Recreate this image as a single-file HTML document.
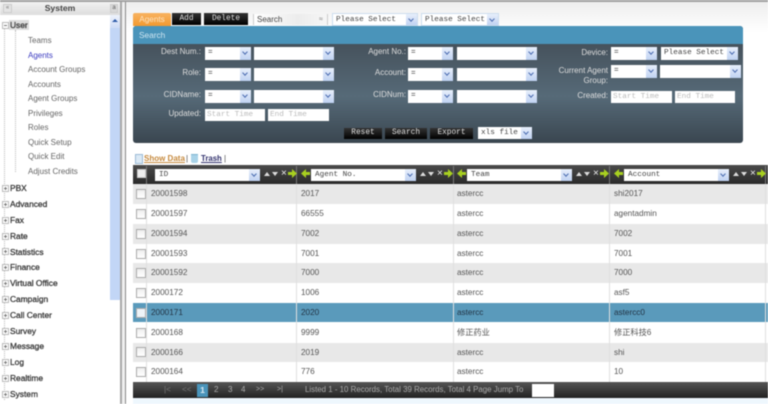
<!DOCTYPE html>
<html><head><meta charset="utf-8"><style>
html,body{margin:0;padding:0;width:768px;height:404px;overflow:hidden;background:#fff}
body{position:relative;font-family:"Liberation Sans","Noto Sans CJK SC",sans-serif;font-size:8.2px;color:#444}
#w{position:absolute;left:0;top:0;width:768px;height:404px;overflow:hidden;background:#fff;filter:blur(.4px)}
div,span.a{position:absolute;white-space:nowrap}
.tr{left:28px;color:#666;font-size:8px;line-height:10px}
.th{left:10px;color:#3a3a3a;font-size:8.4px;-webkit-text-stroke:.3px #3a3a3a;line-height:10px}
.pm{left:2px;width:5px;height:5px;border:1px solid #bbb;background:#fff}
.pm::before{content:"";position:absolute;left:1px;top:2px;width:3px;height:1px;background:#777}
.pl::after{content:"";position:absolute;left:2px;top:1px;width:1px;height:3px;background:#777}
.s{background:#fff;color:#444;font:7.7px/12px "Liberation Mono",monospace;padding-left:3px;box-sizing:border-box;overflow:hidden}
.s i{position:absolute;right:0;top:0;bottom:0;width:11px;background:linear-gradient(#e8effb,#c0d2f2)}
.s i::after{content:"";position:absolute;left:3px;top:3px;width:3px;height:3px;border-right:1.5px solid #4a6cb0;border-bottom:1.5px solid #4a6cb0;transform:rotate(45deg)}
.l{color:#ddd;font-size:8px;line-height:12px;text-align:right}
.in{background:#fff;color:#bbb;font:7.7px/12px "Liberation Mono",monospace;padding-left:2px;box-sizing:border-box}
.b{background:linear-gradient(#333,#000);color:#ddd;font:7.8px/12px "Liberation Mono",monospace;text-align:center}
.r{left:133px;width:635px}
.c{line-height:20px;font-size:8.2px;color:#555}
.cb{left:136px;width:8px;height:8px;border:1px solid #aaa;background:linear-gradient(#eee,#fff)}
.v{width:1px;background:#e0e0e0}
.hv{width:1px;background:#777;top:166px;height:18px}
.p{top:382px;line-height:16px;color:#aaa;font-size:8.1px}
.ic{color:#eee;font-size:10px;top:169px;line-height:10px}
.up,.dn{top:172px;width:0;height:0;border-left:3px solid transparent;border-right:3px solid transparent}
.up{border-bottom:4px solid #ddd}.dn{border-top:4px solid #ddd}
svg{position:absolute;top:169px;width:9px;height:9px}
</style></head><body><div id="w">
<div style="left:0;top:0;width:768px;height:2px;background:#a0a0a0"></div>
<!-- sidebar -->
<div style="left:0;top:2px;width:120px;height:13px;background:linear-gradient(#f2f2f2,#ddd)"></div>
<div style="left:3px;top:4px;width:9px;height:9px;background:#e4e4e4;border:1px solid #ccc;box-sizing:border-box;font-size:6px;line-height:7px;text-align:center;color:#777">«</div>
<div style="left:40px;width:40px;text-align:center;top:3px;font-size:8.6px;line-height:11px;font-weight:bold;color:#444">System</div>
<div style="left:110px;top:4px;width:8px;height:9px;background:#d8d8d8;border:1px solid #ccc;box-sizing:border-box;font-size:6px;line-height:7px;text-align:center;color:#555">a</div>
<div style="left:110px;top:15px;width:10px;height:285px;background:#c2d6f6"></div>
<div style="left:110px;top:15px;width:10px;height:13px;background:linear-gradient(#eef3fc,#cfdcf6)"></div>
<div style="left:112px;top:19px;width:0;height:0;border-left:3px solid transparent;border-right:3px solid transparent;border-bottom:3px solid #2d5aa8"></div>
<div style="left:120px;top:2px;width:2px;height:402px;background:#a8a8a8"></div>
<div style="left:122px;top:2px;width:3px;height:402px;background:#f0f0f0"></div>
<div style="left:125px;top:2px;width:1px;height:402px;background:#888"></div>
<div style="left:4px;top:28px;width:0;height:372px;border-left:1px dotted #bbb"></div>
<div style="left:15px;top:30px;width:0;height:142px;border-left:1px dotted #bbb"></div>
<div class="pm" style="top:22px"></div><div class="th" style="top:20px;background:#ddd;padding:0 1px;left:9px">User</div>
<div class="tr" style="top:36px">Teams</div>
<div class="tr" style="top:51px;color:#3b3bc0">Agents</div>
<div class="tr" style="top:65px">Account Groups</div>
<div class="tr" style="top:80px">Accounts</div>
<div class="tr" style="top:94px">Agent Groups</div>
<div class="tr" style="top:109px">Privileges</div>
<div class="tr" style="top:123px">Roles</div>
<div class="tr" style="top:138px">Quick Setup</div>
<div class="tr" style="top:152px">Quick Edit</div>
<div class="tr" style="top:167px">Adjust Credits</div>
<div class="pm pl" style="top:185px"></div><div class="th" style="top:183px">PBX</div>
<div class="pm pl" style="top:201px"></div><div class="th" style="top:199px">Advanced</div>
<div class="pm pl" style="top:217px"></div><div class="th" style="top:215px">Fax</div>
<div class="pm pl" style="top:233px"></div><div class="th" style="top:231px">Rate</div>
<div class="pm pl" style="top:248px"></div><div class="th" style="top:247px">Statistics</div>
<div class="pm pl" style="top:264px"></div><div class="th" style="top:262px">Finance</div>
<div class="pm pl" style="top:280px"></div><div class="th" style="top:278px">Virtual Office</div>
<div class="pm pl" style="top:296px"></div><div class="th" style="top:294px">Campaign</div>
<div class="pm pl" style="top:312px"></div><div class="th" style="top:310px">Call Center</div>
<div class="pm pl" style="top:328px"></div><div class="th" style="top:326px">Survey</div>
<div class="pm pl" style="top:343px"></div><div class="th" style="top:341px">Message</div>
<div class="pm pl" style="top:359px"></div><div class="th" style="top:357px">Log</div>
<div class="pm pl" style="top:375px"></div><div class="th" style="top:373px">Realtime</div>
<div class="pm pl" style="top:391px"></div><div class="th" style="top:389px">System</div>
<!-- top -->
<div style="left:126px;top:2px;width:642px;height:30px;background:linear-gradient(#eee,#fff)"></div>
<div style="left:133px;top:13px;width:38px;height:13px;background:linear-gradient(#f8b260,#f39a30);color:#fde3c0;font-size:8.2px;line-height:13px;text-align:center;border-radius:2px 2px 0 0">Agents</div>
<div class="b" style="left:172px;top:13px;width:29px;height:12px">Add</div>
<div class="b" style="left:204px;top:13px;width:44px;height:12px">Delete</div>
<div class="s" style="left:253px;top:14px;width:75px;height:11px;line-height:11px;font-family:'Liberation Sans',sans-serif;font-size:8px;background:linear-gradient(90deg,#fff,#ececec 60%,#f6f6f6);border-left:1px solid #ccc;border-right:1px solid #ccc">Search<span style="position:absolute;right:4px;top:0;color:#777;font-size:7px">≈</span></div>
<div class="s" style="left:332px;top:13px;width:86px;height:13px;border:1px solid #cde">Please Select<i></i></div>
<div class="s" style="left:421px;top:13px;width:78px;height:13px;border:1px solid #cde">Please Select<i></i></div>
<!-- search panel -->
<div style="left:133px;top:26px;width:610px;height:117px;border-radius:3px;background:linear-gradient(#46525c 15%,#566a78 60%,#3a4650)"></div>
<div style="left:133px;top:26px;width:610px;height:18px;border-radius:3px 3px 0 0;background:#4a94ba;color:#cfe6f2;font-size:8.3px;line-height:18px;text-indent:6px">Search</div>
<div class="l" style="left:133px;width:68px;top:46px">Dest Num.:</div>
<div class="s" style="left:205px;top:47px;width:46px;height:13px">=<i></i></div>
<div class="s" style="left:254px;top:47px;width:80px;height:13px"><i></i></div>
<div class="l" style="left:133px;width:68px;top:67px">Role:</div>
<div class="s" style="left:205px;top:68px;width:46px;height:13px">=<i></i></div>
<div class="s" style="left:254px;top:68px;width:80px;height:13px"><i></i></div>
<div class="l" style="left:133px;width:68px;top:89px">CIDName:</div>
<div class="s" style="left:205px;top:90px;width:46px;height:13px">=<i></i></div>
<div class="s" style="left:254px;top:90px;width:80px;height:13px"><i></i></div>
<div class="l" style="left:133px;width:68px;top:108px">Updated:</div>
<div class="in" style="left:205px;top:109px;width:60px;height:12px">Start Time</div>
<div class="in" style="left:268px;top:109px;width:61px;height:12px">End Time</div>
<div class="l" style="left:340px;width:66px;top:46px">Agent No.:</div>
<div class="s" style="left:408px;top:47px;width:45px;height:13px">=<i></i></div>
<div class="s" style="left:457px;top:47px;width:80px;height:13px"><i></i></div>
<div class="l" style="left:340px;width:66px;top:67px">Account:</div>
<div class="s" style="left:408px;top:68px;width:45px;height:13px">=<i></i></div>
<div class="s" style="left:457px;top:68px;width:80px;height:13px"><i></i></div>
<div class="l" style="left:340px;width:66px;top:89px">CIDNum:</div>
<div class="s" style="left:408px;top:90px;width:45px;height:13px">=<i></i></div>
<div class="s" style="left:457px;top:90px;width:80px;height:13px"><i></i></div>
<div class="l" style="left:540px;width:68px;top:47px">Device:</div>
<div class="s" style="left:611px;top:47px;width:46px;height:13px">=<i></i></div>
<div class="s" style="left:661px;top:47px;width:77px;height:13px">Please Select<i></i></div>
<div class="l" style="left:540px;width:68px;top:66px;line-height:9.6px">Current Agent<br>Group:</div>
<div class="s" style="left:611px;top:65px;width:46px;height:13px">=<i></i></div>
<div class="s" style="left:660px;top:65px;width:81px;height:13px"><i></i></div>
<div class="l" style="left:540px;width:68px;top:90px">Created:</div>
<div class="in" style="left:611px;top:91px;width:61px;height:12px">Start Time</div>
<div class="in" style="left:675px;top:91px;width:60px;height:12px">End Time</div>
<div class="b" style="left:344px;top:128px;width:38px;height:11px;line-height:11px">Reset</div>
<div class="b" style="left:385px;top:128px;width:42px;height:11px;line-height:11px">Search</div>
<div class="b" style="left:430px;top:128px;width:43px;height:11px;line-height:11px">Export</div>
<div class="s" style="left:478px;top:127px;width:54px;height:12px">xls file<i></i></div>
<!-- links -->
<div style="left:135px;top:154px;width:6px;height:8px;background:#dbe9f5;border:1px solid #9bbbd6"></div>
<div style="left:144px;top:153px;font-size:8px;line-height:11px;font-weight:bold;color:#c68a3e;text-decoration:underline">Show Data</div>
<div style="left:186px;top:153px;font-size:8px;line-height:11px;color:#555">|</div>
<div style="left:191px;top:154px;width:7px;height:8px;background:#a9d3e8;border-top:1px solid #7fb5d0;border-radius:0 0 2px 2px"></div>
<div style="left:201px;top:153px;font-size:7.8px;line-height:11px;font-weight:bold;color:#33336e;text-decoration:underline">Trash</div>
<div style="left:224px;top:153px;font-size:8px;line-height:11px;color:#555">|</div>
<!-- table header -->
<div class="r" style="top:165px;height:19px;background:linear-gradient(#4a4a4a,#2a2a2a)"></div>
<div style="left:137px;top:169px;width:9px;height:9px;background:#eee;border:1px solid #ccc;box-sizing:border-box"></div>
<div class="hv" style="left:146px"></div><div class="hv" style="left:296px"></div><div class="hv" style="left:453px"></div><div class="hv" style="left:609px"></div><div class="hv" style="left:765px"></div>
<div class="s" style="left:155px;top:169px;width:105px;height:12px;padding-left:4px">ID<i></i></div>
<div class="s" style="left:311px;top:169px;width:105px;height:12px;padding-left:4px">Agent No.<i></i></div>
<div class="s" style="left:467px;top:169px;width:105px;height:12px;padding-left:4px">Team<i></i></div>
<div class="s" style="left:624px;top:169px;width:105px;height:12px;padding-left:4px">Account<i></i></div>
<div class="up" style="left:264px"></div><div class="dn" style="left:272px"></div><div class="ic" style="left:281px">×</div>
<svg style="left:288px" viewBox="0 0 9 9"><path d="M0 3h4V0l5 4.5L4 9V6H0z" fill="#a8d020"/></svg>
<svg style="left:301px" viewBox="0 0 9 9"><path d="M9 3H5V0L0 4.5 5 9V6h4z" fill="#a8d020"/></svg>
<div class="up" style="left:420px"></div><div class="dn" style="left:428px"></div><div class="ic" style="left:437px">×</div>
<svg style="left:444px" viewBox="0 0 9 9"><path d="M0 3h4V0l5 4.5L4 9V6H0z" fill="#a8d020"/></svg>
<svg style="left:457px" viewBox="0 0 9 9"><path d="M9 3H5V0L0 4.5 5 9V6h4z" fill="#a8d020"/></svg>
<div class="up" style="left:576px"></div><div class="dn" style="left:584px"></div><div class="ic" style="left:593px">×</div>
<svg style="left:600px" viewBox="0 0 9 9"><path d="M0 3h4V0l5 4.5L4 9V6H0z" fill="#a8d020"/></svg>
<svg style="left:614px" viewBox="0 0 9 9"><path d="M9 3H5V0L0 4.5 5 9V6h4z" fill="#a8d020"/></svg>
<div class="up" style="left:733px"></div><div class="dn" style="left:741px"></div><div class="ic" style="left:750px">×</div>
<svg style="left:757px" viewBox="0 0 9 9"><path d="M0 3h4V0l5 4.5L4 9V6H0z" fill="#a8d020"/></svg>
<!-- rows bg -->
<div class="r" style="top:184px;height:20px;background:#e8e8e8"></div>
<div class="r" style="top:224px;height:20px;background:#e8e8e8"></div>
<div class="r" style="top:263px;height:20px;background:#e8e8e8"></div>
<div class="r" style="top:303px;height:19px;background:#5a9abb"></div>
<div class="r" style="top:343px;height:19px;background:#e8e8e8"></div>
<div class="v" style="left:146px;top:184px;height:198px"></div><div class="v" style="left:296px;top:184px;height:198px"></div><div class="v" style="left:453px;top:184px;height:198px"></div><div class="v" style="left:609px;top:184px;height:198px"></div><div class="v" style="left:765px;top:184px;height:198px"></div>
<!-- rows -->
<div class="cb" style="top:189px"></div><div class="c" style="left:151px;top:184px">20001598</div><div class="c" style="left:301px;top:184px">2017</div><div class="c" style="left:457px;top:184px">astercc</div><div class="c" style="left:614px;top:184px">shi2017</div>
<div class="cb" style="top:209px"></div><div class="c" style="left:151px;top:204px">20001597</div><div class="c" style="left:301px;top:204px">66555</div><div class="c" style="left:457px;top:204px">astercc</div><div class="c" style="left:614px;top:204px">agentadmin</div>
<div class="cb" style="top:229px"></div><div class="c" style="left:151px;top:224px">20001594</div><div class="c" style="left:301px;top:224px">7002</div><div class="c" style="left:457px;top:224px">astercc</div><div class="c" style="left:614px;top:224px">7002</div>
<div class="cb" style="top:249px"></div><div class="c" style="left:151px;top:244px">20001593</div><div class="c" style="left:301px;top:244px">7001</div><div class="c" style="left:457px;top:244px">astercc</div><div class="c" style="left:614px;top:244px">7001</div>
<div class="cb" style="top:268px"></div><div class="c" style="left:151px;top:263px">20001592</div><div class="c" style="left:301px;top:263px">7000</div><div class="c" style="left:457px;top:263px">astercc</div><div class="c" style="left:614px;top:263px">7000</div>
<div class="cb" style="top:288px"></div><div class="c" style="left:151px;top:283px">2000172</div><div class="c" style="left:301px;top:283px">1006</div><div class="c" style="left:457px;top:283px">astercc</div><div class="c" style="left:614px;top:283px">asf5</div>
<div class="cb" style="top:308px;background:#eef4f8"></div><div class="c" style="left:151px;top:303px;color:#234">2000171</div><div class="c" style="left:301px;top:303px;color:#234">2020</div><div class="c" style="left:457px;top:303px;color:#234">astercc</div><div class="c" style="left:614px;top:303px;color:#234">astercc0</div>
<div class="cb" style="top:328px"></div><div class="c" style="left:151px;top:323px">2000168</div><div class="c" style="left:301px;top:323px">9999</div><div class="c" style="left:457px;top:323px">修正药业</div><div class="c" style="left:614px;top:323px">修正科技6</div>
<div class="cb" style="top:347px"></div><div class="c" style="left:151px;top:343px">2000166</div><div class="c" style="left:301px;top:343px">2019</div><div class="c" style="left:457px;top:343px">astercc</div><div class="c" style="left:614px;top:343px">shi</div>
<div class="cb" style="top:367px"></div><div class="c" style="left:151px;top:362px">2000164</div><div class="c" style="left:301px;top:362px">776</div><div class="c" style="left:457px;top:362px">astercc</div><div class="c" style="left:614px;top:362px">10</div>
<!-- pager -->
<div class="r" style="top:382px;height:16px;background:linear-gradient(#555,#222)"></div>
<div class="r" style="top:398px;height:6px;background:#eef7fd"></div>
<div class="p" style="left:164px;color:#777">|&lt;</div>
<div class="p" style="left:182px;color:#777">&lt;&lt;</div>
<div style="left:197px;top:384px;width:11px;height:13px;background:#4a94ba;color:#dcebf3;font-size:8.6px;font-weight:bold;line-height:13px;text-align:center">1</div>
<div class="p" style="left:214px">2</div>
<div class="p" style="left:228px">3</div>
<div class="p" style="left:241px">4</div>
<div class="p" style="left:256px;font-size:7px">&gt;&gt;</div>
<div class="p" style="left:277px;font-size:7px">&gt;|</div>
<div class="p" style="left:305px;font-size:7.9px">Listed 1 - 10 Records, Total 39 Records, Total 4 Page Jump To</div>
<div style="left:532px;top:384px;width:22px;height:13px;background:#fff"></div>
</div></body></html>
